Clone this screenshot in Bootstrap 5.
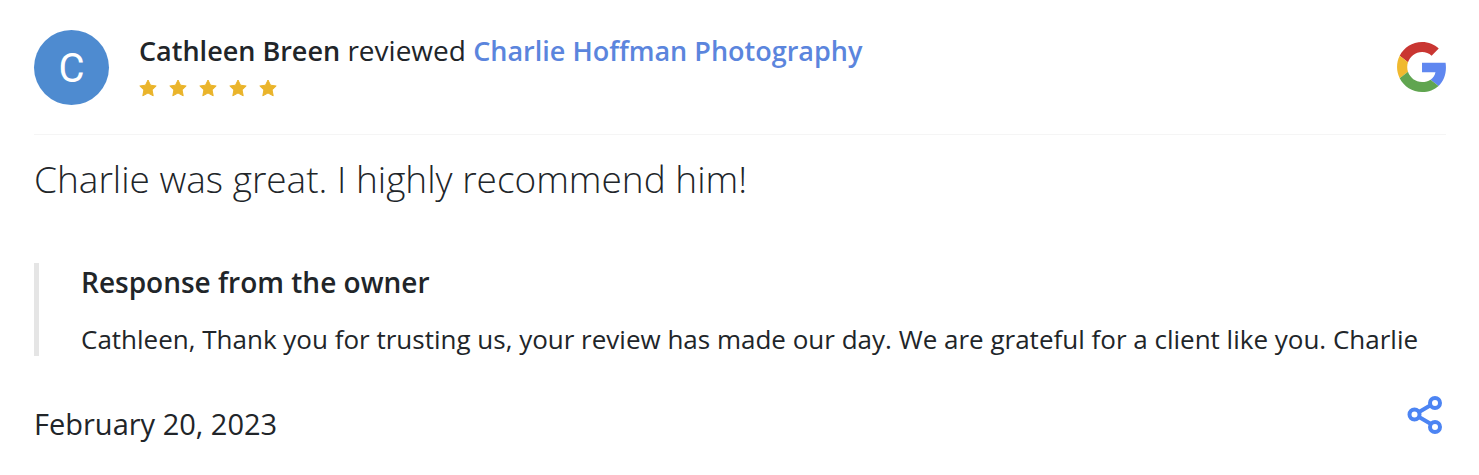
<!DOCTYPE html>
<html lang="en">
<head>
<meta charset="utf-8">
<meta name="viewport" content="width=device-width, initial-scale=1">
<title>Review of Charlie Hoffman Photography</title>
<link href="https://cdn.jsdelivr.net/npm/bootstrap@5.3.0/dist/css/bootstrap.min.css" rel="stylesheet">
<style>
body{font-family:"Open Sans",sans-serif;color:#212529;background:#fff}
.review{padding:30px 33px 0 34px}
.review-head{gap:30px;padding-bottom:29px;border-bottom:1px solid #f5f5f5}
.avatar{width:75px;height:75px;background:#4e8bd0;color:#fff;font:400 40px/78px Roboto,sans-serif}
.who{font-size:28px;line-height:40px}
.who strong,.who a{font-size:27px;font-weight:600}
.who a{color:#5b85dd}
.stars{gap:12px;margin-top:8px;color:#eab42a}
.quote{font-size:37px;line-height:48px;font-weight:300;margin-top:20px}
.reply{border-left:5px solid #e5e5e5;padding-left:42px;margin-top:60px}
.reply h2{font-size:28px;line-height:38px;font-weight:600;margin-bottom:22px}
.reply p{font-size:26px;line-height:33px}
.foot{font-size:29px;line-height:36px;margin-top:38px;padding-right:3px}
.foot time{margin-top:12px}
.share{color:#4c84f3}
</style>
</head>
<body>
<article class="review">
  <header class="review-head d-flex align-items-center">
    <div class="avatar rounded-circle text-center flex-shrink-0">C</div>
    <div class="flex-grow-1 align-self-start">
      <p class="who mb-0"><strong>Cathleen Breen</strong> reviewed <a class="text-decoration-none" href="#">Charlie Hoffman Photography</a></p>
      <div class="stars d-flex" role="img" aria-label="5 out of 5 stars">
        <svg width="18" height="18" viewBox="0 0 18 18" fill="currentColor" stroke="currentColor" stroke-linejoin="round"><path id="star" d="M9 1 11.500 6.200 17.200 7 13.100 11 14.200 16.800 9 14 3.800 16.800 4.900 11 .8 7 6.500 6.200Z"/></svg>
        <svg width="18" height="18" viewBox="0 0 18 18" fill="currentColor" stroke="currentColor" stroke-linejoin="round"><use href="#star"/></svg>
        <svg width="18" height="18" viewBox="0 0 18 18" fill="currentColor" stroke="currentColor" stroke-linejoin="round"><use href="#star"/></svg>
        <svg width="18" height="18" viewBox="0 0 18 18" fill="currentColor" stroke="currentColor" stroke-linejoin="round"><use href="#star"/></svg>
        <svg width="18" height="18" viewBox="0 0 18 18" fill="currentColor" stroke="currentColor" stroke-linejoin="round"><use href="#star"/></svg>
      </div>
    </div>
    <svg class="flex-shrink-0" width="49" height="51" viewBox="0 0 47 49" role="img" aria-label="Google">
      <path fill="#c93632" d="M24 9.5c3.54 0 6.71 1.22 9.21 3.6l6.85-6.85C35.9 2.38 30.47 0 24 0 14.62 0 6.51 5.38 2.56 13.22l7.98 6.19C12.43 13.72 17.74 9.5 24 9.5z"/>
      <path fill="#5f87f0" d="M46.98 24.55c0-1.57-.15-3.09-.38-4.55H24v9.02h12.94c-.58 2.96-2.26 5.48-4.78 7.18l7.73 6c4.51-4.18 7.09-10.36 7.09-17.65z"/>
      <path fill="#f0b92f" d="M10.53 28.59c-.48-1.45-.76-2.99-.76-4.59s.27-3.14.76-4.59l-7.98-6.19C.92 16.46 0 20.12 0 24c0 3.88.92 7.54 2.56 10.78l7.97-6.19z"/>
      <path fill="#60a550" d="M24 48c6.48 0 11.93-2.13 15.89-5.81l-7.73-6c-2.15 1.45-4.92 2.3-8.16 2.3-6.26 0-11.57-4.22-13.47-9.91l-7.98 6.19C6.51 42.62 14.62 48 24 48z"/>
    </svg>
  </header>
  <p class="quote mb-0">Charlie was great. I highly recommend him!</p>
  <section class="reply">
    <h2>Response from the owner</h2>
    <p class="mb-0">Cathleen, Thank you for trusting us, your review has made our day. We are grateful for a client like you. Charlie</p>
  </section>
  <footer class="foot d-flex justify-content-between">
    <time datetime="2023-02-20">February 20, 2023</time>
    <button class="share btn p-0 border-0 lh-1 align-self-start" type="button" aria-label="Share">
      <svg class="d-block" width="36" height="40" viewBox="0 0 36 40" fill="none" stroke="currentColor" stroke-width="4"><path d="M12 18 24 11M12 23 24 30"/><circle cx="7.500" cy="20.500" r="5"/><circle cx="28" cy="9" r="5"/><circle cx="28" cy="33" r="5"/></svg>
    </button>
  </footer>
</article>
<script src="https://cdn.jsdelivr.net/npm/bootstrap@5.3.0/dist/js/bootstrap.bundle.min.js"></script>
</body>
</html>
